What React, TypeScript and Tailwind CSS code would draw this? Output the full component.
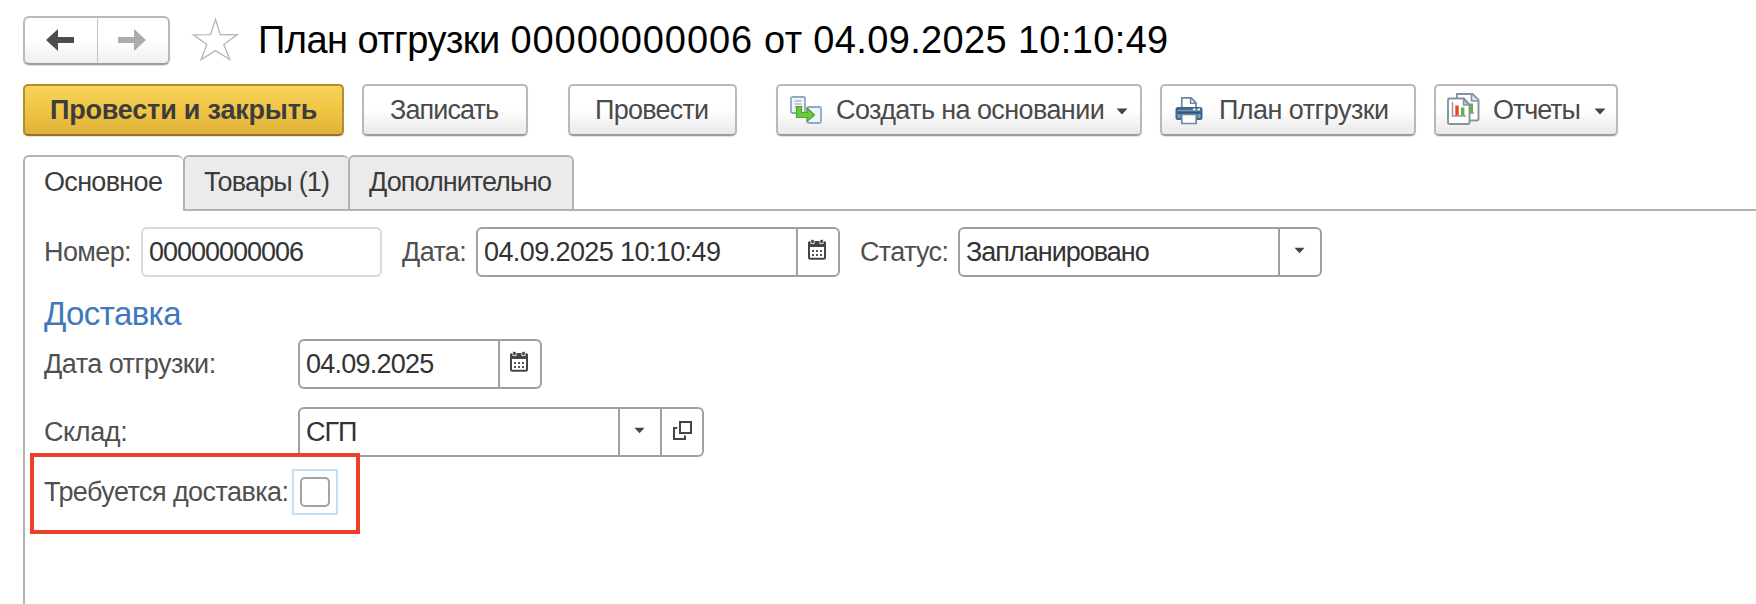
import type { ReactNode } from 'react';

const buttonBase =
  'flex h-[52px] shrink-0 items-center rounded-[5px] border-2 whitespace-nowrap shadow-[0_1px_1px_rgba(0,0,0,0.12)]';
const greyButton =
  'border-[#b9b9b9] border-b-[#9d9d9d] bg-linear-to-b from-white from-50% to-[#e9e9e9] text-[#4a4a4a]';

function Button({ className, children }: { className: string; children: ReactNode }) {
  return (
    <button type="button" className={`${buttonBase} ${greyButton} ${className}`}>
      {children}
    </button>
  );
}

function Caret({ className = '' }: { className?: string }) {
  return (
    <svg className={`shrink-0 ${className}`} width="12" height="7" viewBox="0 0 12 7">
      <path d="M0.5 0.5h11L6 6.5z" fill="#444" />
    </svg>
  );
}

function CalendarIcon() {
  return (
    <svg className="-mt-[6px] mr-[2px]" width="18" height="21" viewBox="0 0 18 21">
      <rect x="1" y="3" width="16" height="16.8" rx="1.2" fill="#fff" stroke="#444" strokeWidth="2" />
      <path d="M0 3h18v5H0z" fill="#444" />
      <path d="M2.8 0.4h3.4v4.2H2.8zM11.8 0.4h3.4v4.2h-3.4z" fill="#444" stroke="#fff" strokeWidth="0.8" />
      <path
        d="M4 11h2v2H4zM8 11h2v2H8zM12 11h2v2h-2zM4 15h2v2H4zM8 15h2v2H8zM12 15h2v2h-2z"
        fill="#555"
      />
    </svg>
  );
}

function OpenIcon() {
  return (
    <svg className="-mt-[4px]" width="19" height="19" viewBox="0 0 19 19" fill="none" stroke="#444" strokeWidth="2">
      <path d="M7 1h11v11H7z" />
      <path d="M4.2 7H1v11h11v-3.4" />
    </svg>
  );
}

function CreateIcon() {
  return (
    <svg className="shrink-0" width="32" height="28" viewBox="0 0 32 28">
      <rect x="1" y="1" width="14" height="16" rx="1.5" fill="#f1f6fa" stroke="#8fa9c2" strokeWidth="1.8" />
      <path d="M4.5 5h7M4.5 8h7M4.5 11h7" stroke="#a9bccf" strokeWidth="1.4" />
      <rect x="17.5" y="11" width="13.5" height="16" rx="1.5" fill="#eef4f9" stroke="#8fa9c2" strokeWidth="1.8" />
      <path d="M6.5 10.5h5v6h5.5v-4.5L24.5 19 17 25.5v-4H6.5z" fill="#6cc63f" stroke="#4ea32a" strokeWidth="1.2" />
    </svg>
  );
}

function PrinterIcon() {
  return (
    <svg className="shrink-0" width="28" height="29" viewBox="0 0 28 29">
      <path d="M6.8 12V1.8h9.4l4.8 5V12" fill="#fff" stroke="#6f86a3" strokeWidth="1.7" />
      <path d="M15.6 2v5.3H21" fill="none" stroke="#6f86a3" strokeWidth="1.5" />
      <rect x="0.5" y="11" width="27" height="13" rx="2.5" fill="#3f658f" />
      <path d="M2.5 14.5h23" stroke="#7897b8" strokeWidth="1.4" />
      <path d="M2.5 20h3M22.5 20h3" stroke="#7f9dbd" strokeWidth="4" />
      <path d="M18 13.4h2.5M22.5 13.4H25" stroke="#fff" strokeWidth="1.8" />
      <path d="M4.5 17.3h19" stroke="#2c4d75" strokeWidth="2" />
      <path d="M6.8 18.3h14.4v9.2H6.8z" fill="#fff" stroke="#6f86a3" strokeWidth="1.7" />
    </svg>
  );
}

function ReportsIcon() {
  return (
    <svg className="-mt-[2px] shrink-0" width="33" height="32" viewBox="0 0 33 32">
      <path d="M10 1h15.5l6 6v19a1.5 1.5 0 0 1-1.5 1.5H10z" fill="#fff" stroke="#8593a1" strokeWidth="1.9" />
      <path d="M24.5 1.5V8H31" fill="#dde3e8" stroke="#8593a1" strokeWidth="1.6" />
      <path d="M24.5 10.5v9" stroke="#5fb23a" strokeWidth="3" />
      <path d="M22 20h5" stroke="#8a8a8a" strokeWidth="1.4" />
      <path
        d="M2.5 5.5H17l5.5 6V29.5a1.5 1.5 0 0 1-1.5 1.5H2.5A1.5 1.5 0 0 1 1 29.5V7a1.5 1.5 0 0 1 1.5-1.5z"
        fill="#fff"
        stroke="#8593a1"
        strokeWidth="1.9"
      />
      <path d="M16.5 6v6H22z" fill="#c9d0d7" stroke="#8593a1" strokeWidth="1.5" />
      <path d="M5.5 9v14H19" fill="none" stroke="#999" strokeWidth="1.5" />
      <path d="M10 12.5v10" stroke="#e5452c" strokeWidth="3.4" />
      <path d="M15.7 14.5v8" stroke="#5fb23a" strokeWidth="3.4" />
    </svg>
  );
}

function Field({
  value,
  className,
  cells = [],
}: {
  value: string;
  className: string;
  cells?: ReactNode[];
}) {
  return (
    <div className={`flex h-[50px] shrink-0 overflow-hidden rounded-[6px] border-2 bg-white text-[#333] ${className}`}>
      <span className="flex min-w-0 flex-1 items-center pl-[6px] whitespace-nowrap">{value}</span>
      {cells.map((cell, i) => (
        <span key={i} className="flex w-[42px] shrink-0 items-center justify-center border-l-2 border-[#a0a0a0]">
          {cell}
        </span>
      ))}
    </div>
  );
}

export default function App() {
  return (
    <div className="flex h-[604px] w-[1756px] flex-col overflow-hidden bg-white pl-[23px] font-['Liberation_Sans',Arial,sans-serif] text-[27px] leading-[30px]">
      <header className="mt-[15px] flex h-[50px] shrink-0 items-center">
        <div className="flex h-[49px] w-[147px] rounded-[6px] border-2 border-[#b9b9b9] border-b-[#9d9d9d] bg-linear-to-b from-white from-50% to-[#efefef] shadow-[0_1px_1px_rgba(0,0,0,0.12)]">
          <div className="flex w-[73px] items-center justify-center border-r border-[#c4c4c4] pr-[3px]">
            <svg width="28" height="22" viewBox="0 0 28 22">
              <path d="M0 11 12 0v8h16v6H12v8z" fill="#4d4d4d" />
            </svg>
          </div>
          <div className="flex flex-1 items-center justify-center pr-[2px]">
            <svg width="28" height="22" viewBox="0 0 28 22">
              <path d="M28 11 16 0v8H0v6h16v8z" fill="#ababab" />
            </svg>
          </div>
        </div>
        <svg className="-mt-[2px] ml-[21px] shrink-0" width="48" height="45" viewBox="0 0 48 45">
          <path
            d="M24.5 2.5 29.3 17.6 46 17.8 32.8 27.4 38.8 42.6 24.5 33.6 10.2 42.6 15.8 27.4 2.5 17.8 19.5 17.6z"
            fill="#fff"
            stroke="#b4bac1"
            strokeWidth="1.4"
          />
        </svg>
        <h1 className="ml-[19px] text-[38px] leading-[44px] tracking-[0.35px] whitespace-nowrap text-black">
          <span className="tracking-[-0.55px]">План отгрузки</span>{' '}
          <span className="tracking-[0.92px]">00000000006</span> от 04.09.2025 10:10:49
        </h1>
      </header>

      <div className="mt-[19px] flex h-[52px] shrink-0">
        <button
          type="button"
          className={`${buttonBase} w-[321px] border-[#b18f2c] border-b-[#93741c] bg-linear-to-b from-[#f7d35c] via-[#f0c544] to-[#e0b13a] pl-[25px] font-bold tracking-[-0.2px] text-[#3d3d3d]`}
        >
          Провести и закрыть
        </button>
        <Button className="ml-[18px] w-[166px] pl-[26px] tracking-[-0.9px]">Записать</Button>
        <Button className="ml-[40px] w-[169px] pl-[25px] tracking-[-0.76px]">Провести</Button>
        <Button className="ml-[39px] w-[366px] pl-[12px]">
          <CreateIcon />
          <span className="ml-[14px] tracking-[-0.6px]">Создать на основании</span>
          <Caret className="mt-[3px] ml-[12px]" />
        </Button>
        <Button className="ml-[18px] w-[256px] pl-[13px]">
          <PrinterIcon />
          <span className="ml-[16px] tracking-[-0.55px]">План отгрузки</span>
        </Button>
        <Button className="ml-[18px] w-[184px] pl-[11px]">
          <ReportsIcon />
          <span className="ml-[13px] tracking-[-1.1px]">Отчеты</span>
          <Caret className="mt-[3px] ml-[14px]" />
        </Button>
      </div>

      <div className="mt-[19px] flex h-[56px] shrink-0 text-[#3b3b3b]">
        <div className="flex w-[160px] items-center rounded-t-[6px] border-t-2 border-l-2 border-[#b3b3b3] pb-[4px] pl-[19px] tracking-[-0.68px]">
          Основное
        </div>
        <div className="flex w-[166px] items-center rounded-tl-[6px] rounded-tr-[6px] border-2 border-r-0 border-[#b3b3b3] bg-[#ebebeb] pb-[2px] pl-[19px] tracking-[-0.82px] whitespace-nowrap">
          Товары (1)
        </div>
        <div className="-ml-px flex w-[226px] items-center rounded-t-[6px] border-2 border-[#b3b3b3] bg-[#ebebeb] pb-[2px] pl-[19px] tracking-[-0.94px]">
          Дополнительно
        </div>
        <div className="flex-1 border-b-2 border-[#b3b3b3]" />
      </div>

      <main className="flex flex-1 flex-col border-l-2 border-[#b3b3b3] pl-[19px] text-[#4f4f4f]">
        <div className="mt-[16px] flex items-center">
          <span className="w-[97px] tracking-[-0.6px]">Номер:</span>
          <Field value="00000000006" className="w-[241px] border-[#dadada] tracking-[-1.01px]" />
          <span className="ml-[20px] w-[74px] tracking-[-0.65px]">Дата:</span>
          <Field
            value="04.09.2025 10:10:49"
            className="w-[364px] border-[#a0a0a0] tracking-[-0.6px]"
            cells={[<CalendarIcon />]}
          />
          <span className="ml-[20px] w-[98px] tracking-[-0.65px]">Статус:</span>
          <Field
            value="Запланировано"
            className="w-[364px] border-[#a0a0a0] tracking-[-1px]"
            cells={[<Caret className="-mt-[4px] mr-[2px] w-[11px]" />]}
          />
        </div>

        <h2 className="mt-[18px] text-[33px] leading-[38px] tracking-[-0.6px] text-[#3f78bd]">Доставка</h2>

        <div className="mt-[6px] flex items-center">
          <span className="w-[254px] tracking-[-0.52px]">Дата отгрузки:</span>
          <Field
            value="04.09.2025"
            className="w-[244px] border-[#a0a0a0] tracking-[-0.75px]"
            cells={[<CalendarIcon />]}
          />
        </div>

        <div className="mt-[18px] flex items-center">
          <span className="w-[254px] tracking-[-0.4px]">Склад:</span>
          <Field
            value="СГП"
            className="w-[406px] border-[#a0a0a0] tracking-[-1px]"
            cells={[<Caret className="-mt-[4px] mr-[2px] w-[11px]" />, <OpenIcon />]}
          />
        </div>

        <div className="relative -mt-[4px] -ml-[14px] flex h-[81px] w-[330px] items-center border-4 border-[#ea4127] pb-[4px] pl-[10px]">
          <span className="w-[248px] tracking-[-0.57px] whitespace-nowrap">Требуется доставка:</span>
          <span className="flex size-[46px] items-center justify-center border-2 border-[#c6dff8]">
            <span className="size-[30px] rounded-[5px] border-2 border-[#a3a3a3]" />
          </span>
        </div>
      </main>
    </div>
  );
}
